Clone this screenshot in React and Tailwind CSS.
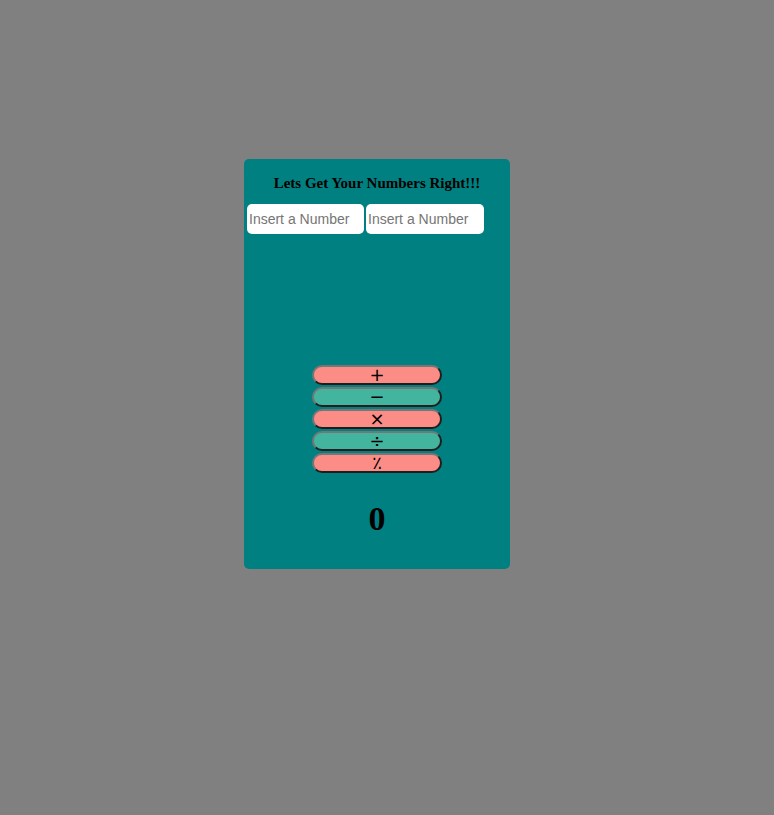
import React, { useState } from "react";

const ops = [
  { sym: "+", key: "add", bg: "bg-[#fc8d86]" },
  { sym: "−", key: "sub", bg: "bg-[#43b59e]" },
  { sym: "×", key: "mul", bg: "bg-[#fc8d86]" },
  { sym: "÷", key: "div", bg: "bg-[#43b59e]" },
  { sym: "٪", key: "mod", bg: "bg-[#fc8d86]" },
];

const App = () => {
  const [a, setA] = useState("");
  const [b, setB] = useState("");
  const [result, setResult] = useState(0);

  const calc = (k) => {
    const x = Number(a) || 0;
    const y = Number(b) || 0;
    if (k === "add") setResult(x + y);
    else if (k === "sub") setResult(x - y);
    else if (k === "mul") setResult(x * y);
    else if (k === "div") setResult(y ? x / y : 0);
    else setResult(y ? x % y : 0);
  };

  return (
    <div className="min-h-[815px] bg-[#808080] pt-[159px] pl-[244px]">
      <div className="w-[266px] h-[410px] rounded-[5px] bg-[#008080] flex flex-col items-center">
        <h1 className="pt-[15px] text-[15px] leading-[18px] font-bold text-black font-['Liberation_Serif',serif]">
          Lets Get Your Numbers Right!!!
        </h1>
        <div className="self-start flex gap-[2px] pl-[3px] mt-[12px]">
          <input
            value={a}
            onChange={(e) => setA(e.target.value)}
            placeholder="Insert a Number"
            className="w-[117px] h-[30px] rounded-[5px] bg-white px-[2px] text-[14px] text-black placeholder:text-[#757575] outline-none font-['Liberation_Sans',Arial,sans-serif]"
          />
          <input
            value={b}
            onChange={(e) => setB(e.target.value)}
            placeholder="Insert a Number"
            className="w-[118px] h-[30px] rounded-[5px] bg-white px-[2px] text-[14px] text-black placeholder:text-[#757575] outline-none font-['Liberation_Sans',Arial,sans-serif]"
          />
        </div>
        <div className="mt-[131px] flex flex-col gap-[2px]">
          {ops.map((op) => (
            <button
              key={op.key}
              onClick={() => calc(op.key)}
              className={`w-[130px] h-[20px] rounded-full ${op.bg} border-2 border-t-[#767676] border-l-[#767676] border-r-[#1e1e1e] border-b-[#1e1e1e] flex items-center justify-center text-[18px] leading-none text-black font-normal font-['DejaVu_Sans',sans-serif]`}
            >
              {op.sym}
            </button>
          ))}
        </div>
        <div className="mt-[26px] text-[34px] leading-[40px] font-bold text-black font-['Liberation_Serif',serif]">
          {result}
        </div>
      </div>
    </div>
  );
};

export default App;
